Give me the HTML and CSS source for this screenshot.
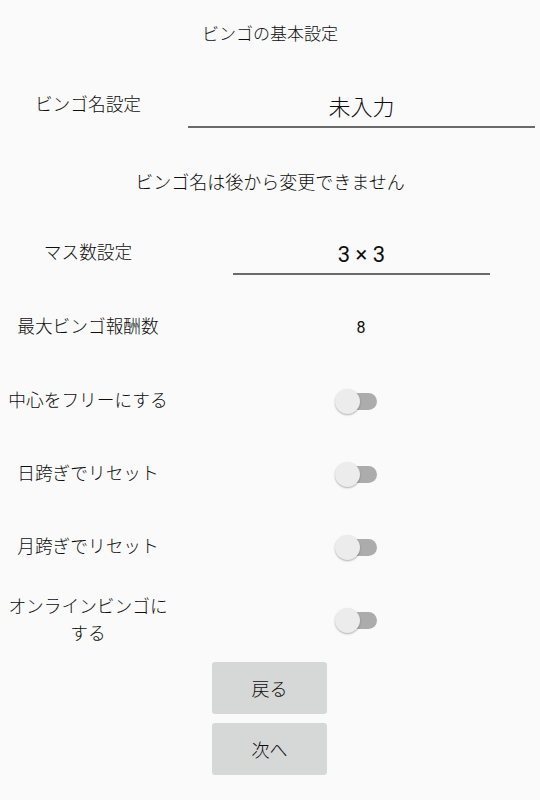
FILE: index.html
```html
<!DOCTYPE html>
<html lang="ja">
<head>
  <meta charset="UTF-8">
  <meta name="viewport" content="width=device-width, initial-scale=1.0">
  <title>ビンゴの基本設定</title>
  <link rel="stylesheet" href="styles.css">
</head>
<body>
  <div class="screen">
    <div class="title">ビンゴの基本設定</div>

    <div class="row row-name">
      <div class="label">ビンゴ名設定</div>
      <div class="value">
        <div class="field field-name">未入力</div>
      </div>
    </div>

    <div class="notice">ビンゴ名は後から変更できません</div>

    <div class="row row-size">
      <div class="label">マス数設定</div>
      <div class="value">
        <div class="field field-size">3 × 3</div>
      </div>
    </div>

    <div class="row row-max">
      <div class="label">最大ビンゴ報酬数</div>
      <div class="value count">8</div>
    </div>

    <div class="row row-toggle">
      <div class="label">中心をフリーにする</div>
      <div class="value"><span class="switch"><span class="thumb"></span></span></div>
    </div>

    <div class="row row-toggle">
      <div class="label">日跨ぎでリセット</div>
      <div class="value"><span class="switch"><span class="thumb"></span></span></div>
    </div>

    <div class="row row-toggle">
      <div class="label">月跨ぎでリセット</div>
      <div class="value"><span class="switch"><span class="thumb"></span></span></div>
    </div>

    <div class="row row-toggle">
      <div class="label">オンラインビンゴにする</div>
      <div class="value"><span class="switch"><span class="thumb"></span></span></div>
    </div>

    <div class="buttons">
      <button class="btn">戻る</button>
      <button class="btn">次へ</button>
    </div>
  </div>
</body>
</html>
```

FILE: styles.css
```css
body {
  margin: 0;
  background-color: #fafafa;
  color: #0e0e0e;
  font-family: Roboto, "Noto Sans CJK JP", sans-serif;
  font-weight: 300;
}

.screen {
  width: 540px;
  height: 800px;
  display: flex;
  flex-direction: column;
}

.title {
  height: 64px;
  display: flex;
  align-items: center;
  justify-content: center;
  font-size: 17px;
}

.row {
  display: grid;
  grid-template-columns: 176px 1fr;
  align-items: center;
}

.label {
  text-align: center;
  font-size: 17.7px;
  line-height: 27px;
}

.value {
  display: flex;
  align-items: center;
  justify-content: center;
}

.row-name {
  height: 82px;
}

.field {
  box-sizing: border-box;
  display: flex;
  align-items: center;
  justify-content: center;
  font-size: 22px;
  border-bottom: 2px solid #6a6a6a;
}

.field-name {
  width: 347px;
  height: 46px;
  margin-left: 12px;
  margin-right: 5px;
  padding-top: 2px;
}

.notice {
  height: 70px;
  display: flex;
  align-items: center;
  justify-content: center;
  font-size: 18px;
}

.row-size {
  height: 74px;
}

.field-size {
  width: 257px;
  height: 40px;
  margin-top: 4px;
  margin-left: 7px;
  font-weight: 400;
}

.row-max {
  height: 75px;
}

.count {
  font-size: 16px;
  font-weight: 400;
  padding-left: 6px;
}

.row-toggle {
  height: 73px;
}

.switch {
  position: relative;
  display: block;
  width: 41px;
  height: 17px;
  margin-right: 4px;
  border-radius: 9px;
  background-color: #acacac;
}

.switch .thumb {
  position: absolute;
  left: -1px;
  top: -4px;
  width: 25px;
  height: 25px;
  border-radius: 50%;
  background-color: #ececec;
  box-shadow: 0 1px 2px rgba(0, 0, 0, 0.3);
}

.buttons {
  display: flex;
  flex-direction: column;
  align-items: center;
  gap: 9px;
  margin-top: 5px;
}

.btn {
  width: 115px;
  height: 52px;
  border: none;
  border-radius: 3px;
  background-color: #d6d7d7;
  color: #0e0e0e;
  font-family: Roboto, "Noto Sans CJK JP", sans-serif;
  font-weight: 300;
  font-size: 18px;
  margin-left: -1px;
}
```
